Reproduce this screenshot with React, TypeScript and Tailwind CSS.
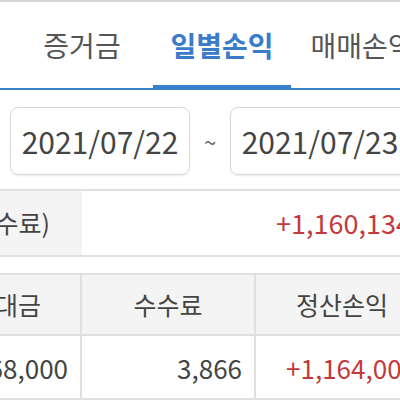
import React from "react";

const tabs = ["증거금", "일별손익", "매매손익"];

export default function App() {
  return (
    <div className="w-[400px] h-[400px] overflow-hidden bg-white font-['Noto_Sans_CJK_KR',sans-serif] text-[#444]">
      {/* Tabs */}
      <div className="h-[90px] border-t-2 border-t-[#d4d4d4] border-b-2 border-b-[#3b7fcf] flex pl-[12px]">
        {tabs.map((t, i) => (
          <div
            key={t}
            className={`relative w-[140px] shrink-0 flex items-center justify-center text-[28px] whitespace-nowrap ${
              i === 1 ? "text-[#3a7cc9] font-semibold" : "text-[#555]"
            }`}
          >
            {t}
            {i === 1 && (
              <span className="absolute left-[1px] right-[1px] bottom-[-2px] h-[5px] bg-[#3b7fcf]" />
            )}
          </div>
        ))}
      </div>

      {/* Date range */}
      <div className="flex items-center pl-[10px] mt-[17px]">
        <div className="w-[180px] h-[68px] shrink-0 rounded-[8px] border border-[#d6d6d6] shadow-[0_1px_2px_rgba(0,0,0,0.08)] flex items-center justify-center text-[30px] text-[#444]">
          2021/07/22
        </div>
        <div className="w-[40px] shrink-0 text-center text-[22px] text-[#666]">~</div>
        <div className="w-[180px] h-[68px] shrink-0 rounded-[8px] border border-[#d6d6d6] shadow-[0_1px_2px_rgba(0,0,0,0.08)] flex items-center justify-center text-[30px] text-[#444] whitespace-nowrap">
          2021/07/23
        </div>
      </div>

      {/* Summary row */}
      <div className="mt-[14px] ml-[-90px] w-[520px] h-[68px] flex border-y-2 border-[#e0e0e0]">
        <div className="w-[172px] shrink-0 bg-[#f4f4f4] flex items-center justify-end pr-[32px] text-[25px] text-[#444] whitespace-nowrap">
          손익(수수료)
        </div>
        <div className="flex-1 flex items-center justify-end pr-[19px] text-[27px] text-[#c4393b] whitespace-nowrap">
          +1,160,134
        </div>
      </div>

      {/* Table */}
      <div className="mt-[16px] ml-[-90px] w-[520px]">
        <div className="grid grid-cols-[172px_174px_172px] h-[63px] bg-[#f4f4f4] border-y-2 border-[#e0e0e0]">
          <div className="flex items-center justify-center border-r-2 border-[#e0e0e0] text-[25px] text-[#444] whitespace-nowrap">
            거래대금
          </div>
          <div className="flex items-center justify-center border-r-2 border-[#e0e0e0] text-[25px] text-[#444]">
            수수료
          </div>
          <div className="flex items-center justify-center text-[25px] text-[#444] whitespace-nowrap">
            정산손익
          </div>
        </div>
        <div className="grid grid-cols-[172px_174px_172px] h-[64px] bg-white border-b-2 border-[#e0e0e0]">
          <div className="flex items-center justify-end pr-[12px] border-r-2 border-[#e0e0e0] text-[26px] text-[#444]">
            1,568,000
          </div>
          <div className="flex items-center justify-end pr-[12px] border-r-2 border-[#e0e0e0] text-[26px] text-[#444]">
            3,866
          </div>
          <div className="flex items-center justify-end pr-[12px] text-[26px] text-[#c4393b] whitespace-nowrap">
            +1,164,000
          </div>
        </div>
      </div>
    </div>
  );
}
